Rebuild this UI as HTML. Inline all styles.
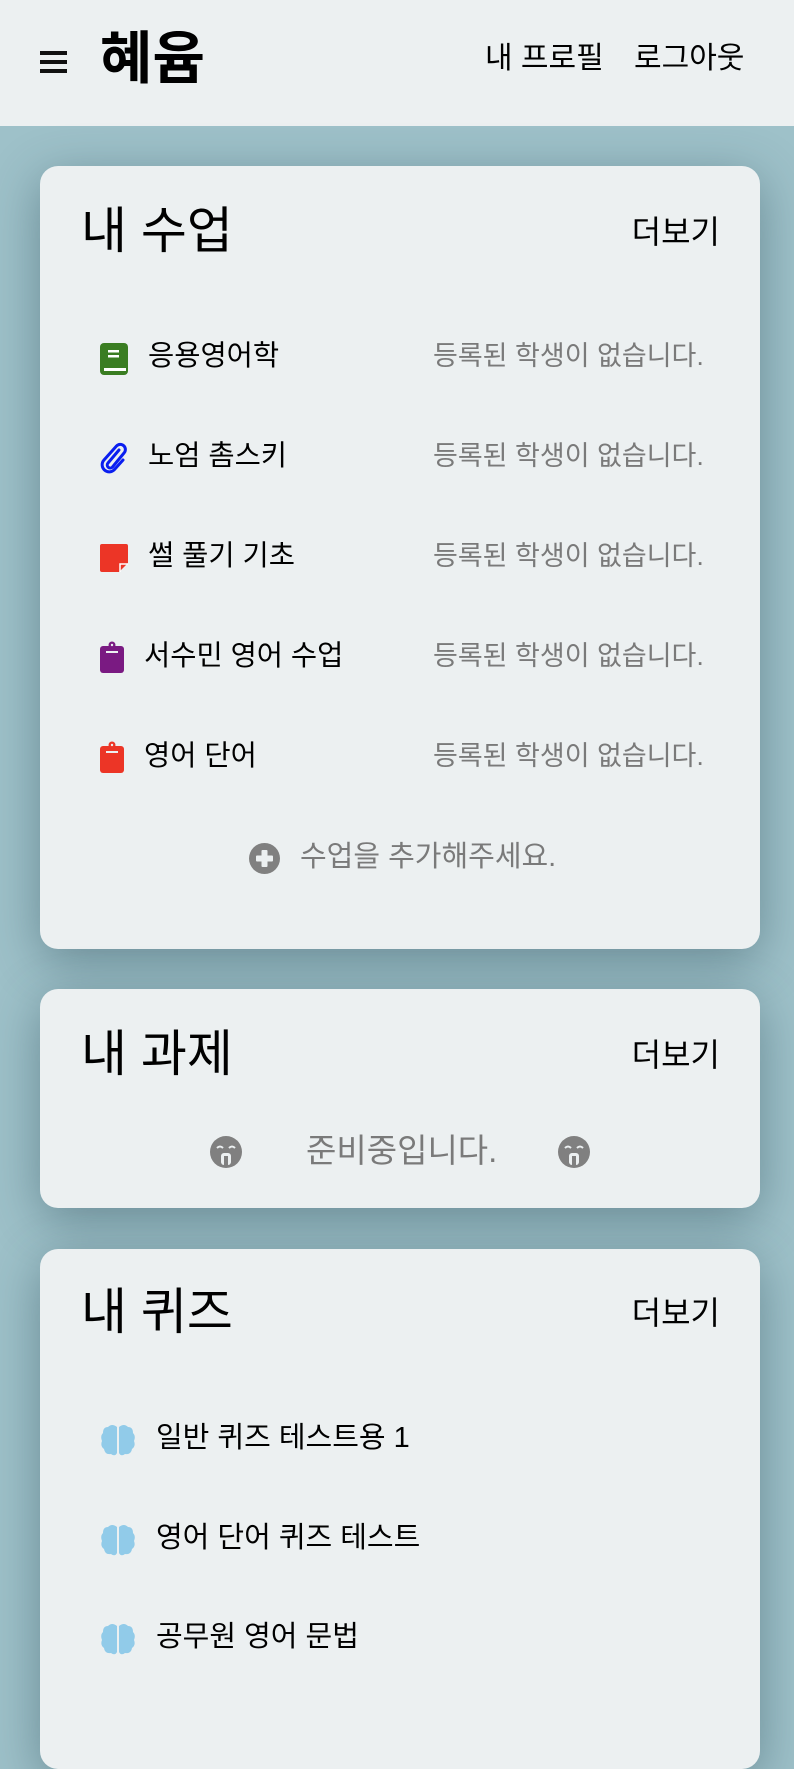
<!DOCTYPE html>
<html><head><meta charset="utf-8"><style>
*{margin:0;padding:0;box-sizing:border-box}
body{width:794px;height:1710px;overflow:hidden;background:#9ec1c9;font-family:"Liberation Sans","Noto Sans CJK KR",sans-serif;position:relative;color:#000}
.hdr{position:absolute;left:0;top:0;width:794px;height:126px;background:#ecf0f1}
.a{position:absolute;white-space:nowrap;line-height:1}
.card{position:absolute;left:40px;width:720px;background:#ecf0f1;border-radius:18px;box-shadow:0 12px 50px rgba(40,70,85,.45)}
.ttl{font-size:50px;left:41px}
.more{font-size:32px;right:40px}
.it{font-size:28.5px}
.gr{font-size:27px;color:#7a7a7a}
</style></head><body>
<div class="hdr">
 <svg class="a" style="left:40px;top:50px" width="28" height="24"><rect x="0" y="1" width="27" height="4" fill="#111"/><rect x="0" y="10" width="27" height="4" fill="#111"/><rect x="0" y="19" width="27" height="4" fill="#111"/></svg>
 <div class="a" style="left:100px;top:31px;font-size:57px;font-weight:bold">혜윰</div>
 <div class="a" style="left:485px;top:44px;font-size:30px">내 프로필</div>
 <div class="a" style="left:634px;top:44px;font-size:30px">로그아웃</div>
</div>

<div class="card" style="top:166px;height:783px">
 <div class="a ttl" style="top:40px">내 수업</div>
 <div class="a more" style="top:50px">더보기</div>
 <svg class="a" style="left:60px;top:177px" width="28" height="32" viewBox="0 0 28 32"><rect x="0" y="0" width="28" height="32" rx="4" fill="#3a7d22"/><rect x="8" y="7" width="11" height="2.5" fill="#fff"/><rect x="8" y="12" width="11" height="2.5" fill="#fff"/><rect x="4" y="25" width="22" height="3" fill="#fff"/></svg>
 <div class="a it" style="left:108px;top:176px">응용영어학</div>
 <div class="a gr" style="left:393px;top:177px">등록된 학생이 없습니다.</div>

 <svg class="a" style="left:59px;top:276px" width="30" height="32" viewBox="0 0 30 32"><path d="M20 8 L9 21 a3 3 0 0 0 4.5 4 L25 11 a5 5 0 0 0 -7.5 -7 L5 18 a7 7 0 0 0 10.5 9.5 L24 18" fill="none" stroke="#0a1ef0" stroke-width="3" stroke-linecap="round"/></svg>
 <div class="a it" style="left:108px;top:276px">노엄 촘스키</div>
 <div class="a gr" style="left:393px;top:277px">등록된 학생이 없습니다.</div>

 <svg class="a" style="left:60px;top:378px" width="28" height="28" viewBox="0 0 28 28"><path d="M2 0H26a2 2 0 0 1 2 2V19L19 28H2a2 2 0 0 1-2-2V2a2 2 0 0 1 2-2z" fill="#ec3526"/><path d="M20 28V20H28" fill="none" stroke="#fff" stroke-width="1.5"/></svg>
 <div class="a it" style="left:108px;top:376px">썰 풀기 기초</div>
 <div class="a gr" style="left:393px;top:377px">등록된 학생이 없습니다.</div>

 <svg class="a" style="left:60px;top:475px" width="24" height="32" viewBox="0 0 24 32"><rect x="0" y="5" width="24" height="27" rx="3" fill="#7a1a82"/><circle cx="12" cy="4" r="3.5" fill="#7a1a82"/><circle cx="12" cy="4" r="1.2" fill="#ecf0f1"/><rect x="6" y="10" width="12" height="2" fill="#ecf0f1"/></svg>
 <div class="a it" style="left:104px;top:476px">서수민 영어 수업</div>
 <div class="a gr" style="left:393px;top:477px">등록된 학생이 없습니다.</div>

 <svg class="a" style="left:60px;top:575px" width="24" height="32" viewBox="0 0 24 32"><rect x="0" y="5" width="24" height="27" rx="3" fill="#ec3526"/><circle cx="12" cy="4" r="3.5" fill="#ec3526"/><circle cx="12" cy="4" r="1.2" fill="#ecf0f1"/><rect x="6" y="10" width="12" height="2" fill="#ecf0f1"/></svg>
 <div class="a it" style="left:104px;top:576px">영어 단어</div>
 <div class="a gr" style="left:393px;top:577px">등록된 학생이 없습니다.</div>

 <svg class="a" style="left:209px;top:677px" width="31" height="31" viewBox="0 0 31 31"><circle cx="15.5" cy="15.5" r="15.5" fill="#808080"/><rect x="12.5" y="7" width="6" height="17" rx="1" fill="#ecf0f1"/><rect x="7" y="12.5" width="17" height="6" rx="1" fill="#ecf0f1"/></svg>
 <div class="a gr" style="left:260px;top:677px;font-size:29px">수업을 추가해주세요.</div>
</div>

<div class="card" style="top:989px;height:219px">
 <div class="a ttl" style="top:40px">내 과제</div>
 <div class="a more" style="top:50px">더보기</div>
 <svg class="a" style="left:170px;top:147px" width="32" height="32" viewBox="0 0 32 32"><circle cx="16" cy="16" r="16" fill="#808080"/><path d="M7 12q3-3 6 0M19 12q3-3 6 0" stroke="#ecf0f1" stroke-width="2" fill="none"/><rect x="11" y="17" width="10" height="12" rx="3" fill="#ecf0f1"/><rect x="14" y="20" width="4" height="9" fill="#808080"/></svg>
 <div class="a" style="left:266px;top:145px;font-size:33px;color:#7a7a7a">준비중입니다.</div>
 <svg class="a" style="left:518px;top:147px" width="32" height="32" viewBox="0 0 32 32"><circle cx="16" cy="16" r="16" fill="#808080"/><path d="M7 12q3-3 6 0M19 12q3-3 6 0" stroke="#ecf0f1" stroke-width="2" fill="none"/><rect x="11" y="17" width="10" height="12" rx="3" fill="#ecf0f1"/><rect x="14" y="20" width="4" height="9" fill="#808080"/></svg>
</div>

<div class="card" style="top:1249px;height:520px">
 <div class="a ttl" style="top:38px">내 퀴즈</div>
 <div class="a more" style="top:48px">더보기</div>
 <svg class="a" style="left:60px;top:175px" width="36" height="32" viewBox="0 0 36 32"><path d="M17 3Q12-1 8 3Q3 3 3 9Q0 12 2 17Q0 22 4 25Q5 31 11 30Q15 33 17 29Z" fill="#91cbe9"/><path d="M19 3Q24-1 28 3Q33 3 33 9Q36 12 34 17Q36 22 32 25Q31 31 25 30Q21 33 19 29Z" fill="#91cbe9"/></svg>
 <div class="a it" style="left:116px;top:175px;font-size:29px">일반 퀴즈 테스트용 1</div>
 <svg class="a" style="left:60px;top:275px" width="36" height="32" viewBox="0 0 36 32"><path d="M17 3Q12-1 8 3Q3 3 3 9Q0 12 2 17Q0 22 4 25Q5 31 11 30Q15 33 17 29Z" fill="#91cbe9"/><path d="M19 3Q24-1 28 3Q33 3 33 9Q36 12 34 17Q36 22 32 25Q31 31 25 30Q21 33 19 29Z" fill="#91cbe9"/></svg>
 <div class="a it" style="left:116px;top:275px;font-size:29px">영어 단어 퀴즈 테스트</div>
 <svg class="a" style="left:60px;top:374px" width="36" height="32" viewBox="0 0 36 32"><path d="M17 3Q12-1 8 3Q3 3 3 9Q0 12 2 17Q0 22 4 25Q5 31 11 30Q15 33 17 29Z" fill="#91cbe9"/><path d="M19 3Q24-1 28 3Q33 3 33 9Q36 12 34 17Q36 22 32 25Q31 31 25 30Q21 33 19 29Z" fill="#91cbe9"/></svg>
 <div class="a it" style="left:116px;top:374px;font-size:29px">공무원 영어 문법</div>
</div>
</body></html>
